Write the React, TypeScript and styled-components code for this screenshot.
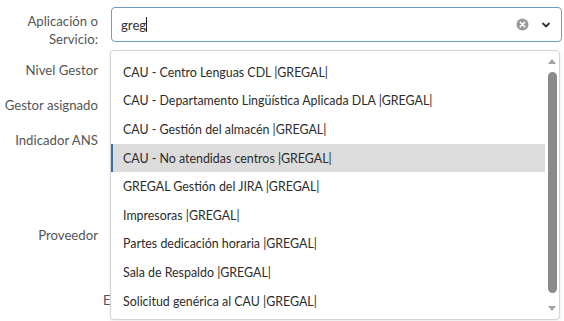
import React from "react";
import styled, { createGlobalStyle } from "styled-components";

const Global = createGlobalStyle`
  html, body { margin: 0; padding: 0; background: #fff; }
  body { font-family: Lato, "Noto Sans", sans-serif; color: #333; overflow: hidden; }
`;

const Page = styled.div`
  position: relative;
  width: 564px;
  height: 321px;
  overflow: hidden;
`;

const Form = styled.div`
  display: flex;
  flex-direction: column;
  padding-top: 7px;
`;

const Row = styled.div<{ $h: number }>`
  display: grid;
  grid-template-columns: 98px 1fr;
  column-gap: 13px;
  height: ${(p) => p.$h}px;
  align-items: center;
`;

const Label = styled.div<{ $left?: boolean }>`
  text-align: ${(p) => (p.$left ? "left" : "right")};
  padding-left: ${(p) => (p.$left ? "103px" : "0")};
  font-size: 13.2px;
  line-height: 18px;
  color: #555;
  white-space: nowrap;
`;

const Field = styled.div`
  position: relative;
  align-self: start;
`;

const Input = styled.div`
  box-sizing: border-box;
  height: 35px;
  width: 451px;
  border: 1px solid #6f9cc0;
  border-radius: 4px;
  display: flex;
  align-items: center;
  padding: 0 10px 0 9px;
  font-size: 13.2px;
  color: #333;
`;

const Caret = styled.span`
  display: inline-block;
  width: 1px;
  height: 15px;
  background: #222;
`;

const Value = styled.span`
  flex: 1;
  display: flex;
  align-items: center;
`;

const Icons = styled.div`
  display: flex;
  align-items: center;
  gap: 12px;
`;

const Menu = styled.div`
  position: absolute;
  left: 110px;
  top: 50px;
  width: 450px;
  height: 270px;
  box-sizing: border-box;
  border: 1px solid #d4d4d4;
  border-radius: 4px;
  background: #fff;
  box-shadow: 0 2px 4px rgba(0, 0, 0, 0.08);
  display: flex;
  padding: 7px 0 0 0;
`;

const List = styled.div`
  flex: 1;
  display: flex;
  flex-direction: column;
`;

const Item = styled.div<{ $active?: boolean }>`
  height: 28.6px;
  display: flex;
  align-items: center;
  padding-left: 10px;
  font-size: 12.4px;
  color: #2b2b2b;
  background: ${(p) => (p.$active ? "#dcdcdd" : "transparent")};
  border-left: 2px solid ${(p) => (p.$active ? "#3c6ea8" : "transparent")};
  margin-right: 2px;
`;

const Scrollbar = styled.div`
  width: 10px;
  margin-top: -7px;
  margin-right: 2px;
  display: flex;
  flex-direction: column;
  align-items: center;
  padding: 3px 0;
  box-sizing: border-box;
`;

const Arrow = styled.div<{ $down?: boolean }>`
  width: 0;
  height: 0;
  border-left: 4.5px solid transparent;
  border-right: 4.5px solid transparent;
  ${(p) =>
    p.$down
      ? "border-top: 5px solid #a3a3a3;"
      : "border-bottom: 5px solid #a3a3a3;"}
  margin: 5px 0;
`;

const Thumb = styled.div`
  flex: 1;
  width: 9px;
  background: #8b8b8b;
  border-radius: 5px;
  margin: 3px 0 8px;
`;

const items = [
  "CAU - Centro Lenguas CDL |GREGAL|",
  "CAU - Departamento Lingüística Aplicada DLA |GREGAL|",
  "CAU - Gestión del almacén |GREGAL|",
  "CAU - No atendidas centros |GREGAL|",
  "GREGAL Gestión del JIRA |GREGAL|",
  "Impresoras |GREGAL|",
  "Partes dedicación horaria |GREGAL|",
  "Sala de Respaldo |GREGAL|",
  "Solicitud genérica al CAU |GREGAL|",
];

export default function App() {
  return (
    <Page>
      <Global />
      <Form>
        <Row $h={46}>
          <Label>
            Aplicación o
            <br />
            Servicio:
          </Label>
          <Field>
            <Input>
              <Value>
                greg
                <Caret />
              </Value>
              <Icons>
                <svg width="13" height="13" viewBox="0 0 13 13">
                  <circle cx="6.5" cy="6.5" r="6" fill="#9a9a9a" />
                  <path d="M4.3 4.3 L8.7 8.7 M8.7 4.3 L4.3 8.7" stroke="#fff" strokeWidth="1.6" strokeLinecap="round" />
                </svg>
                <svg width="10" height="8" viewBox="0 0 10 8">
                  <path d="M2 2.5 L5 5.5 L8 2.5" stroke="#333" strokeWidth="1.8" fill="none" strokeLinecap="round" strokeLinejoin="round" />
                </svg>
              </Icons>
            </Input>
          </Field>
        </Row>
        <Row $h={34}>
          <Label>Nivel Gestor</Label>
          <Field />
        </Row>
        <Row $h={35}>
          <Label>Gestor asignado</Label>
          <Field />
        </Row>
        <Row $h={35}>
          <Label>Indicador ANS</Label>
          <Field />
        </Row>
        <Row $h={60} />
        <Row $h={36}>
          <Label>Proveedor</Label>
          <Field />
        </Row>
        <Row $h={30} />
        <Row $h={34}>
          <Label $left>El</Label>
          <Field />
        </Row>
      </Form>
      <Menu>
        <List>
          {items.map((t, i) => (
            <Item key={t} $active={i === 3}>
              {t}
            </Item>
          ))}
        </List>
        <Scrollbar>
          <Arrow />
          <Thumb />
          <Arrow $down />
        </Scrollbar>
      </Menu>
    </Page>
  );
}
